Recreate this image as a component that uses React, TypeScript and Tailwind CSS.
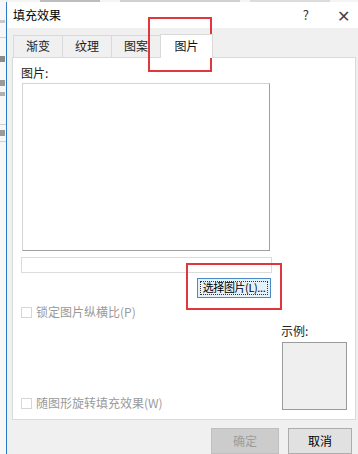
import React from "react";

const font = { fontFamily: '"Noto Sans CJK SC", "Noto Sans", sans-serif' };

function Tab({ label, selected }: { label: string; selected?: boolean }) {
  if (selected) {
    return (
      <div className="relative z-10 -mb-px flex h-[24px] w-[53px] items-center justify-center border border-b-0 border-[#d9d9d9] bg-white text-[12px] leading-none text-[#111]">
        {label}
      </div>
    );
  }
  return (
    <div className="-mr-px flex h-[22px] w-[50px] items-center justify-center border border-b-0 border-[#d9d9d9] bg-[#f0f0f0] text-[12px] leading-none text-[#222]">
      {label}
    </div>
  );
}

function Check({ label }: { label: string }) {
  return (
    <div className="flex h-[11px] items-center">
      <div className="h-[11px] w-[11px] border border-[#d6d6d6] bg-white" />
      <span className="ml-[4px] whitespace-nowrap text-[12px] leading-none text-[#9a9a9a]">{label}</span>
    </div>
  );
}

export default function App() {
  return (
    <div className="relative h-[454px] w-[358px] overflow-hidden bg-white" style={font}>
      {/* top strip of background document */}
      <div className="flex h-[2px] bg-[#f4f4f4]">
        <div className="ml-[40px] h-[2px] w-[60px] bg-[#bdbdbd]" />
        <div className="ml-[20px] h-[2px] w-[120px] bg-[#d0d0d0]" />
        <div className="ml-[10px] h-[2px] w-[80px] bg-[#dcdcdc]" />
      </div>
      <div className="flex h-[452px]">
        {/* left strip of background document */}
        <div className="flex w-[6px] flex-col bg-[#f7f7f7]">
          <div className="mt-[18px] h-[3px] w-[5px] bg-[#c8c8c8]" />
          <div className="mt-[14px] h-[1px] w-[6px] bg-[#d0d0d0]" />
          <div className="mt-[18px] h-[6px] w-[5px] bg-[#8a8a8a]" />
          <div className="mt-[18px] h-[6px] w-[5px] bg-[#9a9a9a]" />
          <div className="mt-[6px] h-[4px] w-[5px] bg-[#b0b0b0]" />
          <div className="mt-[28px] h-[1px] w-[6px] bg-[#cfcfcf]" />
          <div className="mt-[5px] h-[6px] w-[5px] bg-[#9a9a9a]" />
          <div className="mt-[5px] h-[1px] w-[6px] bg-[#cfcfcf]" />
        </div>
        {/* dialog */}
        <div className="flex flex-1 flex-col border-l border-[#2b79c9] bg-[#f0f0f0]">
          {/* title bar */}
          <div className="flex h-[26px] items-center bg-white">
            <span className="ml-[6px] text-[12px] leading-none text-black">填充效果</span>
            <span className="ml-auto text-[13px] leading-none text-[#333]">?</span>
            <span className="ml-[28px] mr-[8px] text-[16px] font-light leading-none text-[#444]">✕</span>
          </div>
          {/* tabs */}
          <div className="flex h-[29px] items-end pl-[6px]">
            <Tab label="渐变" />
            <Tab label="纹理" />
            <Tab label="图案" />
            <Tab label="图片" selected />
          </div>
          {/* panel */}
          <div className="mr-[2px] ml-[5px] flex h-[365px] flex-col border border-[#d9d9d9] bg-white pl-[8px] pt-[8px]">
            <div className="h-[14px] text-[12px] leading-[14px] text-[#222]">图片:</div>
            <div className="mt-[3px] ml-[1px] h-[168px] w-[248px] border border-[#d4d4d4] border-r-[#a0a0a0] border-b-[#a0a0a0] bg-white" />
            <div className="mt-[6px] h-[16px] w-[251px] border border-[#dcdcdc] bg-white" />
            <div className="mt-[5px] ml-[176px] flex h-[20px] w-[74px] items-center justify-center border border-[#4a8ac4] bg-[#e5f1fb] p-[2px]">
              <div className="flex h-full w-full items-center justify-center whitespace-nowrap border border-dotted border-[#333] text-[11px] leading-none tracking-[-0.4px] text-black">
                选择图片(L)...
              </div>
            </div>
            <div className="flex">
              <div className="flex w-[260px] flex-col">
                <div className="mt-[9px]">
                  <Check label="锁定图片纵横比(P)" />
                </div>
                <div className="mt-[80px]">
                  <Check label="随图形旋转填充效果(W)" />
                </div>
              </div>
              <div className="flex flex-col">
                <div className="mt-[26px] h-[14px] text-[12px] leading-[14px] text-[#222]">示例:</div>
                <div className="mt-[4px] ml-[1px] h-[68px] w-[65px] border border-[#9a9a9a] bg-[#efefef]" />
              </div>
            </div>
          </div>
          {/* footer */}
          <div className="flex flex-1 items-start pt-[8px]">
            <div className="ml-[204px] flex h-[26px] w-[68px] items-center justify-center border border-[#bfbfbf] bg-[#cccccc] text-[12px] leading-none text-[#9c9c9c]">
              确定
            </div>
            <div className="ml-[9px] flex h-[26px] w-[64px] items-center justify-center border border-[#adadad] bg-[#e1e1e1] text-[12px] leading-none text-black">
              取消
            </div>
          </div>
        </div>
      </div>
      {/* red annotation boxes */}
      <div className="absolute left-[148px] top-[17px] h-[55px] w-[64px] border-2 border-[#e0363c]" />
      <div className="absolute left-[186px] top-[263px] h-[47px] w-[96px] border-2 border-[#e0363c]" />
    </div>
  );
}
